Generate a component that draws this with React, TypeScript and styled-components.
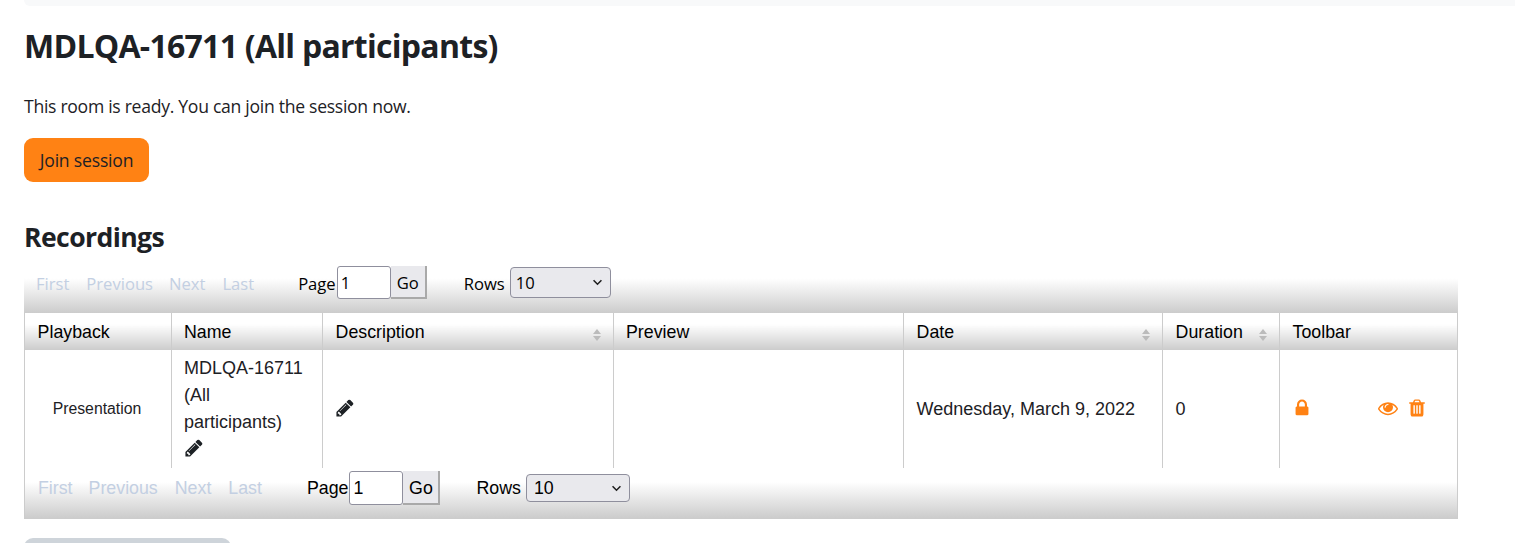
import React from 'react';
import styled, { createGlobalStyle } from 'styled-components';

const GlobalStyle = createGlobalStyle`
  html, body {
    margin: 0;
    padding: 0;
    background: #fff;
    overflow: hidden;
  }
  body {
    font-family: "Open Sans", "Noto Sans", sans-serif;
    color: #1d2125;
  }
`;

const chevron =
  "data:image/svg+xml,%3Csvg xmlns='http://www.w3.org/2000/svg' viewBox='0 0 12 8'%3E%3Cpath d='M1.5 1.5 6 6l4.5-4.5' fill='none' stroke='%23222' stroke-width='1.8'/%3E%3C/svg%3E";

const Page = styled.div`
  width: 1515px;
  height: 543px;
  overflow: hidden;
  padding-left: 24px;
  box-sizing: border-box;
`;

const TopStrip = styled.div`
  height: 6px;
  background: #f8f9fa;
  border-bottom-left-radius: 6px;
`;

const Title = styled.h2`
  margin: 20px 0 0;
  font-size: 32px;
  line-height: 40px;
  font-weight: 700;
  letter-spacing: -0.73px;
`;

const Notice = styled.p`
  margin: 28px 0 0;
  font-size: 17.6px;
  line-height: 24px;
  letter-spacing: -0.29px;
`;

const JoinButton = styled.button`
  display: block;
  margin-top: 20px;
  width: 125px;
  height: 44px;
  padding: 0;
  border: 0;
  border-radius: 9px;
  background: #ff8214;
  color: #1d2125;
  font: inherit;
  font-size: 17.6px;
  letter-spacing: -0.2px;
`;

const SectionTitle = styled.h3`
  margin: 37px 0 0;
  font-size: 26.6px;
  line-height: 36px;
  font-weight: 700;
  letter-spacing: -0.6px;
`;

const RecordingsBox = styled.div`
  width: 1434px;
`;

const Toolbar = styled.div<{ $bottom?: boolean }>`
  display: flex;
  align-items: center;
  box-sizing: border-box;
  height: ${(p) => (p.$bottom ? '51px' : '48px')};
  margin-top: ${(p) => (p.$bottom ? '0' : '10px')};
  padding-left: ${(p) => (p.$bottom ? '13px' : '12px')};
  padding-bottom: ${(p) => (p.$bottom ? '10px' : '14px')};
  background: linear-gradient(#fff 0, #fff 28%, #ccc 100%);
  font-family: ${(p) => (p.$bottom ? '"Liberation Sans", Arial, sans-serif' : '"Open Sans", sans-serif')};
  font-size: ${(p) => (p.$bottom ? '17.8px' : '16.6px')};
  color: #000;
  ${(p) => (p.$bottom ? 'border: 1px solid #ccc; border-top: 0;' : '')}
`;

const PagerText = styled.span<{ $bottom?: boolean }>`
  padding-top: ${(p) => (p.$bottom ? '0' : '2px')};
`;

const PagerLink = styled(PagerText)<{ $gap: number }>`
  color: #c3cfe2;
  margin-right: ${(p) => p.$gap}px;
`;

const PageInput = styled.input<{ $h: number }>`
  box-sizing: border-box;
  width: 54px;
  height: ${(p) => p.$h}px;
  margin: 0 0 0 1px;
  padding: 0 3px;
  border: 1px solid #8f8f9d;
  border-radius: 3px;
  background: #fff;
  font: inherit;
  color: #000;
`;

const GoButton = styled.button<{ $w: number; $h: number; $pad: number }>`
  box-sizing: border-box;
  width: ${(p) => p.$w}px;
  height: ${(p) => p.$h}px;
  padding: ${(p) => p.$pad}px 0 0;
  border: 0 solid #a9a9a9;
  border-right-width: 2px;
  border-bottom-width: 2px;
  background: #e9e9ed;
  font: inherit;
  color: #000;
`;

const RowsLabel = styled(PagerText)<{ $left: number }>`
  margin-left: ${(p) => p.$left}px;
  margin-right: 5px;
`;

const RowsSelect = styled.select<{ $w: number; $h: number; $pad: number }>`
  appearance: none;
  box-sizing: border-box;
  width: ${(p) => p.$w}px;
  height: ${(p) => p.$h}px;
  padding: 0 ${(p) => p.$pad}px;
  border: 1px solid #8f8f9d;
  border-radius: 4px;
  background: #e9e9ed url("${chevron}") no-repeat right 7px center / 11px 7px;
  font: inherit;
  color: #000;
`;

const Table = styled.table`
  width: 1433px;
  table-layout: fixed;
  border-collapse: collapse;
  font-family: "Liberation Sans", Arial, sans-serif;
  font-size: 18px;
`;

const HeadCell = styled.th<{ $tight?: boolean }>`
  position: relative;
  height: 37px;
  box-sizing: border-box;
  padding: 1px 12px 0 ${(p) => (p.$tight ? '12px' : '12.6px')};
  text-align: left;
  font-weight: 400;
  font-size: 17.8px;
  color: #000;
  background: linear-gradient(#fff 0, #fff 30%, #ccc 100%);
  border-left: 1px solid #ccc;
  border-right: 1px solid #ccc;
`;

const SortArrows = styled.span`
  position: absolute;
  right: 12px;
  top: 16px;
  display: flex;
  flex-direction: column;
  gap: 2px;
  &::before {
    content: '';
    border: 4.5px solid transparent;
    border-top: 0;
    border-bottom: 5px solid #bbb;
  }
  &::after {
    content: '';
    border: 4.5px solid transparent;
    border-bottom: 0;
    border-top: 5px solid #bbb;
  }
`;

const Cell = styled.td`
  box-sizing: border-box;
  height: 118px;
  padding: 4px 12px 4px 12.6px;
  border-left: 1px solid #ccc;
  border-right: 1px solid #ccc;
  line-height: 27px;
  color: #1d2125;
`;

const PlaybackCell = styled(Cell)`
  padding: 2px 14px 4px 12px;
  text-align: center;
  font-size: 15.8px;
`;

const NameCell = styled(Cell)`
  padding: 5px 12px;
`;

const IconRow = styled.div`
  display: flex;
  align-items: center;
  box-sizing: border-box;
  height: 27px;
  padding-bottom: 2px;
`;

const NameIconRow = styled(IconRow)`
  padding-bottom: 4px;
`;

const ShiftedIconRow = styled(IconRow)`
  margin-left: -1px;
`;

const Icon = styled.svg<{ $color?: string; $gap?: number }>`
  display: block;
  flex: none;
  width: 20px;
  height: 20px;
  fill: ${(p) => p.$color || '#1d2125'};
  margin-right: ${(p) => p.$gap || 0}px;
`;

const GreyButton = styled.div`
  margin-top: 19px;
  width: 207px;
  height: 30px;
  border-radius: 9px;
  background: #ced4da;
`;

const columns = [147, 151, 291, 290, 259, 117, 178];

const PENCIL =
  'M491 1536l91-91-235-235-91 91v107h128v128h107zm523-928q0-22-22-22-10 0-17 7l-542 542q-7 7-7 17 0 22 22 22 10 0 17-7l542-542q7-7 7-17zm-54-192l416 416-832 832h-416v-416zm683 96q0 53-37 90l-166 166-416-416 166-165q36-38 90-38 53 0 91 38l235 234q37 39 37 91z';
const LOCK =
  'M640 768h512v-192q0-106-75-181t-181-75-181 75-75 181v192zm832 96v576q0 40-28 68t-68 28h-960q-40 0-68-28t-28-68v-576q0-40 28-68t68-28h32v-192q0-184 132-316t316-132 316 132 132 316v192h32q40 0 68 28t28 68z';
const EYE =
  'M1664 960q-152-236-381-353 61 104 61 225 0 185-131.5 316.5t-316.5 131.5-316.5-131.5-131.5-316.5q0-121 61-225-229 117-381 353 133 205 333.5 326.5t434.5 121.5 434.5-121.5 333.5-326.5zm-720-384q0-20-14-34t-34-14q-125 0-214.5 89.5t-89.5 214.5q0 20 14 34t34 14 34-14 14-34q0-86 61-147t147-61q20 0 34-14t14-34zm848 384q0 34-20 69-140 230-376.5 368.5t-499.5 138.5-499.5-139-376.5-368q-20-35-20-69t20-69q140-229 376.5-368t499.5-139 499.5 139 376.5 368q20 35 20 69z';
const TRASH =
  'M704 1376v-704q0-14-9-23t-23-9h-64q-14 0-23 9t-9 23v704q0 14 9 23t23 9h64q14 0 23-9t9-23zm256 0v-704q0-14-9-23t-23-9h-64q-14 0-23 9t-9 23v704q0 14 9 23t23 9h64q14 0 23-9t9-23zm256 0v-704q0-14-9-23t-23-9h-64q-14 0-23 9t-9 23v704q0 14 9 23t23 9h64q14 0 23-9t9-23zm-544-992h448l-48-117q-7-9-17-11h-317q-10 2-17 11zm928 32v64q0 14-9 23t-23 9h-96v948q0 83-47 143.5t-113 60.5h-832q-66 0-113-58.5t-47-141.5v-952h-96q-14 0-23-9t-9-23v-64q0-14 9-23t23-9h309l70-167q15-37 54-63t79-26h320q40 0 79 26t54 63l70 167h309q14 0 23 9t9 23z';

const FaIcon = ({ d, color, gap }: { d: string; color?: string; gap?: number }) => (
  <Icon viewBox="0 0 1792 1792" $color={color} $gap={gap}>
    <path d={d} />
  </Icon>
);

const Pager = ({ bottom }: { bottom?: boolean }) => (
  <Toolbar $bottom={bottom}>
    <PagerLink $bottom={bottom} $gap={bottom ? 16 : 17}>First</PagerLink>
    <PagerLink $bottom={bottom} $gap={bottom ? 17 : 16}>Previous</PagerLink>
    <PagerLink $bottom={bottom} $gap={17}>Next</PagerLink>
    <PagerLink $bottom={bottom} $gap={bottom ? 45 : 44}>Last</PagerLink>
    <PagerText $bottom={bottom}>Page</PagerText>
    <PageInput $h={bottom ? 34 : 33} defaultValue="1" />
    <GoButton $w={bottom ? 37 : 36} $h={bottom ? 34 : 33} $pad={2}>Go</GoButton>
    <RowsLabel $bottom={bottom} $left={bottom ? 36 : 37}>Rows</RowsLabel>
    <RowsSelect $w={bottom ? 104 : 101} $h={bottom ? 28 : 31} $pad={bottom ? 7 : 5} defaultValue="10">
      <option>10</option>
    </RowsSelect>
  </Toolbar>
);

export default function App() {
  return (
    <Page>
      <GlobalStyle />
      <TopStrip />
      <Title>MDLQA-16711 (All participants)</Title>
      <Notice>This room is ready. You can join the session now.</Notice>
      <JoinButton>Join session</JoinButton>
      <SectionTitle>Recordings</SectionTitle>
      <RecordingsBox>
        <Pager />
        <Table>
          <colgroup>
            {columns.map((w, i) => (
              <col key={i} style={{ width: w }} />
            ))}
          </colgroup>
          <thead>
            <tr>
              <HeadCell>Playback</HeadCell>
              <HeadCell $tight>Name</HeadCell>
              <HeadCell>
                Description
                <SortArrows />
              </HeadCell>
              <HeadCell $tight>Preview</HeadCell>
              <HeadCell>
                Date
                <SortArrows />
              </HeadCell>
              <HeadCell>
                Duration
                <SortArrows />
              </HeadCell>
              <HeadCell>Toolbar</HeadCell>
            </tr>
          </thead>
          <tbody>
            <tr>
              <PlaybackCell>Presentation</PlaybackCell>
              <NameCell>
                MDLQA-16711 (All participants)
                <NameIconRow>
                  <FaIcon d={PENCIL} />
                </NameIconRow>
              </NameCell>
              <Cell>
                <ShiftedIconRow>
                  <FaIcon d={PENCIL} />
                </ShiftedIconRow>
              </Cell>
              <Cell />
              <Cell>Wednesday, March 9, 2022</Cell>
              <Cell>0</Cell>
              <Cell>
                <ShiftedIconRow>
                  <FaIcon d={LOCK} color="#ff8214" gap={66} />
                  <FaIcon d={EYE} color="#ff8214" gap={9} />
                  <FaIcon d={TRASH} color="#ff8214" />
                </ShiftedIconRow>
              </Cell>
            </tr>
          </tbody>
        </Table>
        <Pager bottom />
      </RecordingsBox>
      <GreyButton />
    </Page>
  );
}
